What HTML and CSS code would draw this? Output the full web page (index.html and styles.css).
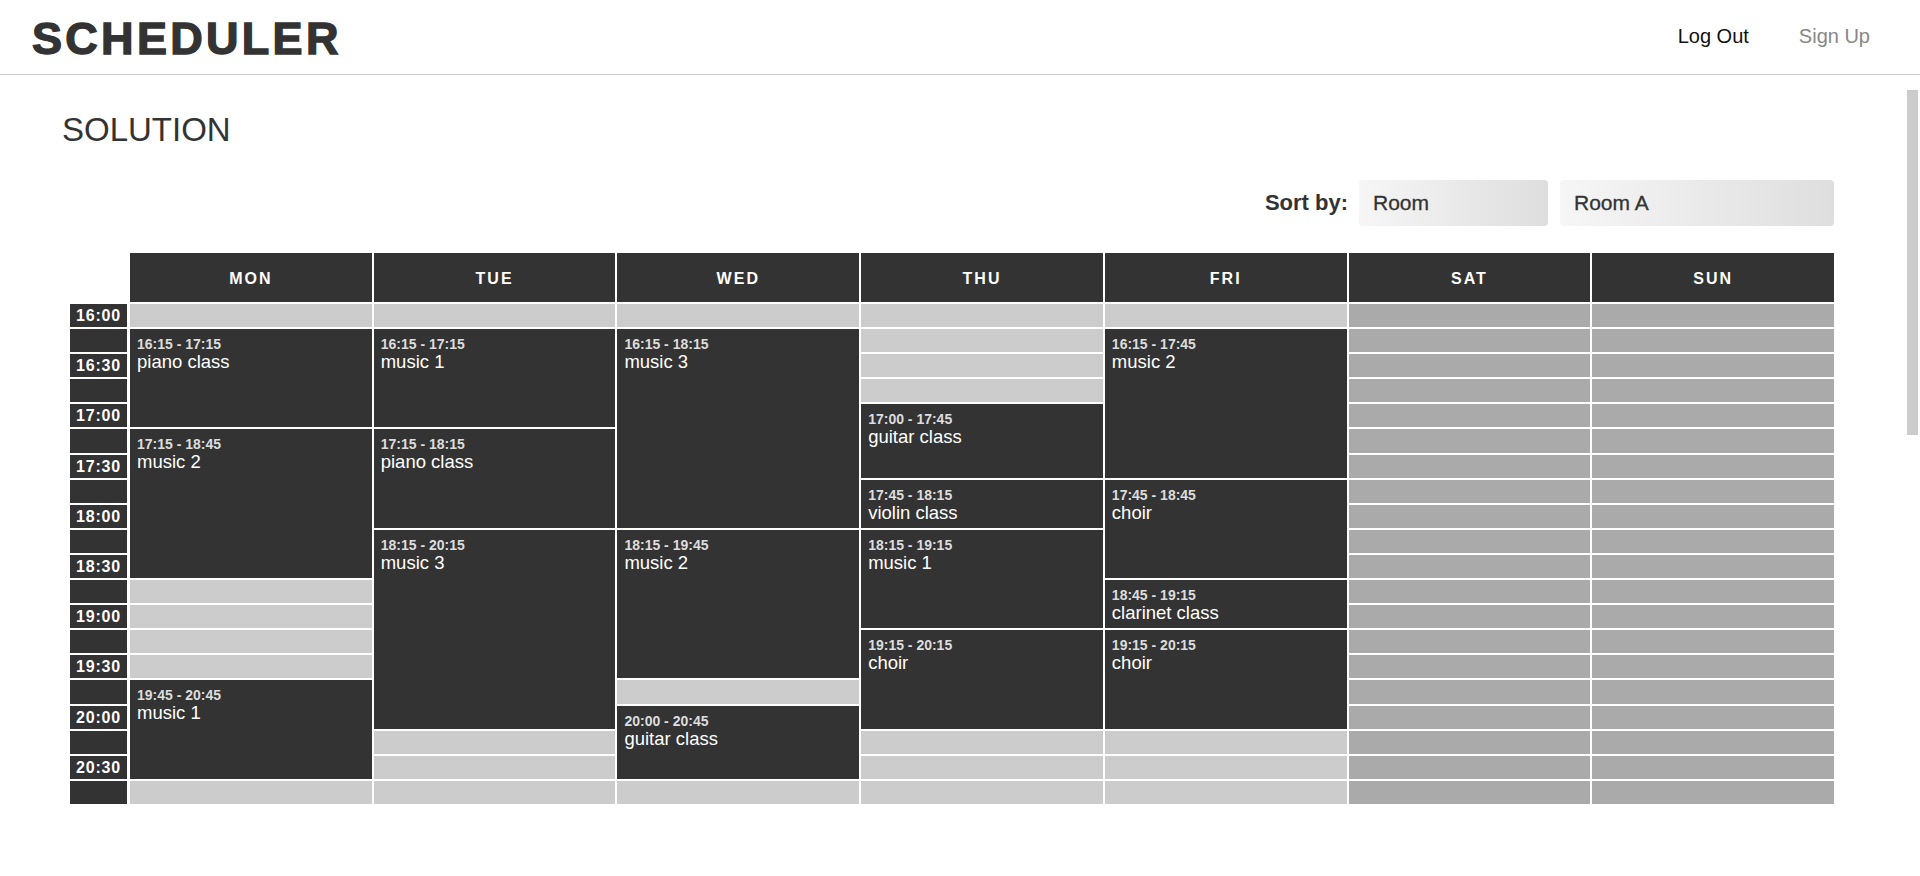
FILE: index.html
```html
<!DOCTYPE html>
<html lang="en">
<head>
<meta charset="utf-8">
<title>Scheduler</title>
<link rel="stylesheet" href="styles.css">
</head>
<body>
<header class="topbar">
  <div class="logo">SCHEDULER</div>
  <nav class="nav">
    <a class="nav-link">Log Out</a>
    <a class="nav-link nav-link--muted">Sign Up</a>
  </nav>
</header>
<main class="page">
  <h1 class="page-title">SOLUTION</h1>
  <div class="toolbar">
    <span class="toolbar-label">Sort by:</span>
    <div class="select select--sort">Room</div>
    <div class="select select--room">Room A</div>
  </div>
  <div class="schedule">
    <div class="corner"></div>
    <div class="time">16:00</div>
    <div class="time"></div>
    <div class="time">16:30</div>
    <div class="time"></div>
    <div class="time">17:00</div>
    <div class="time"></div>
    <div class="time">17:30</div>
    <div class="time"></div>
    <div class="time">18:00</div>
    <div class="time"></div>
    <div class="time">18:30</div>
    <div class="time"></div>
    <div class="time">19:00</div>
    <div class="time"></div>
    <div class="time">19:30</div>
    <div class="time"></div>
    <div class="time">20:00</div>
    <div class="time"></div>
    <div class="time">20:30</div>
    <div class="time"></div>

    <div class="day">MON</div>
    <div class="slot"></div>
    <div class="event span-4"><div class="event-time">16:15 - 17:15</div><div class="event-name">piano class</div></div>
    <div class="event span-6"><div class="event-time">17:15 - 18:45</div><div class="event-name">music 2</div></div>
    <div class="slot"></div>
    <div class="slot"></div>
    <div class="slot"></div>
    <div class="slot"></div>
    <div class="event span-4"><div class="event-time">19:45 - 20:45</div><div class="event-name">music 1</div></div>
    <div class="slot"></div>

    <div class="day">TUE</div>
    <div class="slot"></div>
    <div class="event span-4"><div class="event-time">16:15 - 17:15</div><div class="event-name">music 1</div></div>
    <div class="event span-4"><div class="event-time">17:15 - 18:15</div><div class="event-name">piano class</div></div>
    <div class="event span-8"><div class="event-time">18:15 - 20:15</div><div class="event-name">music 3</div></div>
    <div class="slot"></div>
    <div class="slot"></div>
    <div class="slot"></div>

    <div class="day">WED</div>
    <div class="slot"></div>
    <div class="event span-8"><div class="event-time">16:15 - 18:15</div><div class="event-name">music 3</div></div>
    <div class="event span-6"><div class="event-time">18:15 - 19:45</div><div class="event-name">music 2</div></div>
    <div class="slot"></div>
    <div class="event span-3"><div class="event-time">20:00 - 20:45</div><div class="event-name">guitar class</div></div>
    <div class="slot"></div>

    <div class="day">THU</div>
    <div class="slot"></div>
    <div class="slot"></div>
    <div class="slot"></div>
    <div class="slot"></div>
    <div class="event span-3"><div class="event-time">17:00 - 17:45</div><div class="event-name">guitar class</div></div>
    <div class="event span-2"><div class="event-time">17:45 - 18:15</div><div class="event-name">violin class</div></div>
    <div class="event span-4"><div class="event-time">18:15 - 19:15</div><div class="event-name">music 1</div></div>
    <div class="event span-4"><div class="event-time">19:15 - 20:15</div><div class="event-name">choir</div></div>
    <div class="slot"></div>
    <div class="slot"></div>
    <div class="slot"></div>

    <div class="day">FRI</div>
    <div class="slot"></div>
    <div class="event span-6"><div class="event-time">16:15 - 17:45</div><div class="event-name">music 2</div></div>
    <div class="event span-4"><div class="event-time">17:45 - 18:45</div><div class="event-name">choir</div></div>
    <div class="event span-2"><div class="event-time">18:45 - 19:15</div><div class="event-name">clarinet class</div></div>
    <div class="event span-4"><div class="event-time">19:15 - 20:15</div><div class="event-name">choir</div></div>
    <div class="slot"></div>
    <div class="slot"></div>
    <div class="slot"></div>

    <div class="day">SAT</div>
    <div class="slot slot--off"></div><div class="slot slot--off"></div><div class="slot slot--off"></div><div class="slot slot--off"></div>
    <div class="slot slot--off"></div><div class="slot slot--off"></div><div class="slot slot--off"></div><div class="slot slot--off"></div>
    <div class="slot slot--off"></div><div class="slot slot--off"></div><div class="slot slot--off"></div><div class="slot slot--off"></div>
    <div class="slot slot--off"></div><div class="slot slot--off"></div><div class="slot slot--off"></div><div class="slot slot--off"></div>
    <div class="slot slot--off"></div><div class="slot slot--off"></div><div class="slot slot--off"></div><div class="slot slot--off"></div>

    <div class="day">SUN</div>
    <div class="slot slot--off"></div><div class="slot slot--off"></div><div class="slot slot--off"></div><div class="slot slot--off"></div>
    <div class="slot slot--off"></div><div class="slot slot--off"></div><div class="slot slot--off"></div><div class="slot slot--off"></div>
    <div class="slot slot--off"></div><div class="slot slot--off"></div><div class="slot slot--off"></div><div class="slot slot--off"></div>
    <div class="slot slot--off"></div><div class="slot slot--off"></div><div class="slot slot--off"></div><div class="slot slot--off"></div>
    <div class="slot slot--off"></div><div class="slot slot--off"></div><div class="slot slot--off"></div><div class="slot slot--off"></div>
  </div>
</main>
<div class="scroll-thumb"></div>
</body>
</html>
```
FILE: styles.css
```css
* { box-sizing: border-box; }

html, body {
  margin: 0;
  height: 100%;
}

body {
  display: flex;
  flex-direction: column;
  font-family: "Liberation Sans", Arial, sans-serif;
  color: #333;
  background: #fff;
  overflow: hidden;
}

.topbar {
  flex: 0 0 75px;
  display: flex;
  align-items: center;
  justify-content: space-between;
  padding: 0 50px 0 32px;
  border-bottom: 1px solid #ccc;
}

.logo {
  font-size: 45px;
  font-weight: bold;
  letter-spacing: 3.3px;
  color: #333;
  -webkit-text-stroke: 1.4px #333;
  padding-top: 4px;
}

.nav {
  display: flex;
  gap: 50px;
  padding-bottom: 2px;
}

.nav-link {
  font-size: 20px;
  color: #111;
  cursor: pointer;
}

.nav-link--muted {
  color: #888;
}

.page {
  flex: 1 1 auto;
  overflow: hidden;
  padding: 36px 86px 0 70px;
}

.scroll-thumb {
  position: fixed;
  top: 90px;
  right: 2px;
  width: 11px;
  height: 345px;
  background: #ccc;
}

.page-title {
  margin: 0 0 32px -8px;
  font-size: 33px;
  font-weight: normal;
  color: #333;
  line-height: 37px;
}

.toolbar {
  display: flex;
  justify-content: flex-end;
  align-items: center;
  gap: 11px;
  margin-bottom: 27px;
}

.toolbar-label {
  font-size: 22px;
  font-weight: bold;
  color: #333;
}

.select {
  height: 46px;
  display: flex;
  align-items: center;
  padding-left: 14px;
  font-size: 21px;
  color: #333;
  -webkit-text-stroke: 0.3px #333;
  border-radius: 4px;
  background: linear-gradient(to right, #f6f6f6, #dedede);
}

.select--sort {
  width: 189px;
}

.select--room {
  width: 274px;
  margin-left: 1px;
}

.schedule {
  display: grid;
  grid-auto-flow: column;
  grid-template-columns: 58px repeat(7, 1fr);
  grid-template-rows: 49px repeat(20, 23.1px);
  column-gap: 2px;
  row-gap: 2px;
}

.corner {
  background: transparent;
}

.time {
  margin-right: 1px;
  background: #333;
  color: #fff;
  font-size: 16px;
  font-weight: bold;
  letter-spacing: 0.8px;
  text-align: center;
  line-height: 23px;
}

.day {
  background: #333;
  color: #fff;
  font-size: 16px;
  font-weight: bold;
  letter-spacing: 2px;
  display: flex;
  align-items: center;
  justify-content: center;
  padding-top: 3px;
}

.slot {
  background: #ccc;
}

.slot--off {
  background: #aaa;
}

.event {
  background: #333;
  padding: 7px 7px 0;
  overflow: hidden;
}

.event-time {
  font-size: 14px;
  font-weight: bold;
  line-height: 16px;
  color: #ddd;
}

.event-name {
  font-size: 18.5px;
  line-height: 19px;
  color: #fff;
}

.span-2 { grid-row: span 2; }
.span-3 { grid-row: span 3; }
.span-4 { grid-row: span 4; }
.span-6 { grid-row: span 6; }
.span-8 { grid-row: span 8; }
```
